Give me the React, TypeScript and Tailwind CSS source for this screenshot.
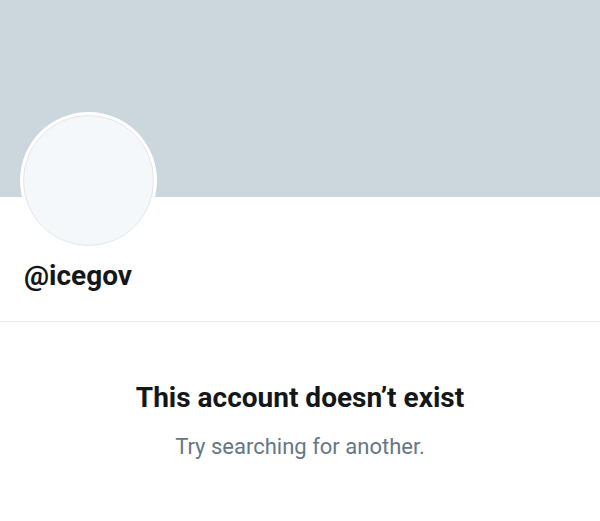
export default function App() {
  return (
    <div className="w-[600px] h-[521px] bg-white overflow-hidden" style={{ fontFamily: 'Roboto, "Liberation Sans", sans-serif' }}>
      <div className="relative">
        <div className="h-[197px] bg-[#ccd6dd]" />
        <div className="absolute left-[20px] top-[112px] w-[137px] h-[137px] rounded-full bg-white p-[3px]">
          <div className="w-full h-full rounded-full bg-[#f5f8fa] border border-[#e1e8ed]" />
        </div>
      </div>
      <div className="h-[125px] border-b border-[#e6ecf0] pl-[24px] pt-[63px]">
        <div className="text-[28px] font-bold leading-[32px] text-[#14171a]">@icegov</div>
      </div>
      <div className="flex flex-col items-center pt-[60px]">
        <div className="text-[28px] font-bold leading-[32px] text-[#14171a]">This account doesn’t exist</div>
        <div className="mt-[21px] text-[22px] leading-[24px] text-[#657786]">Try searching for another.</div>
      </div>
    </div>
  );
}
